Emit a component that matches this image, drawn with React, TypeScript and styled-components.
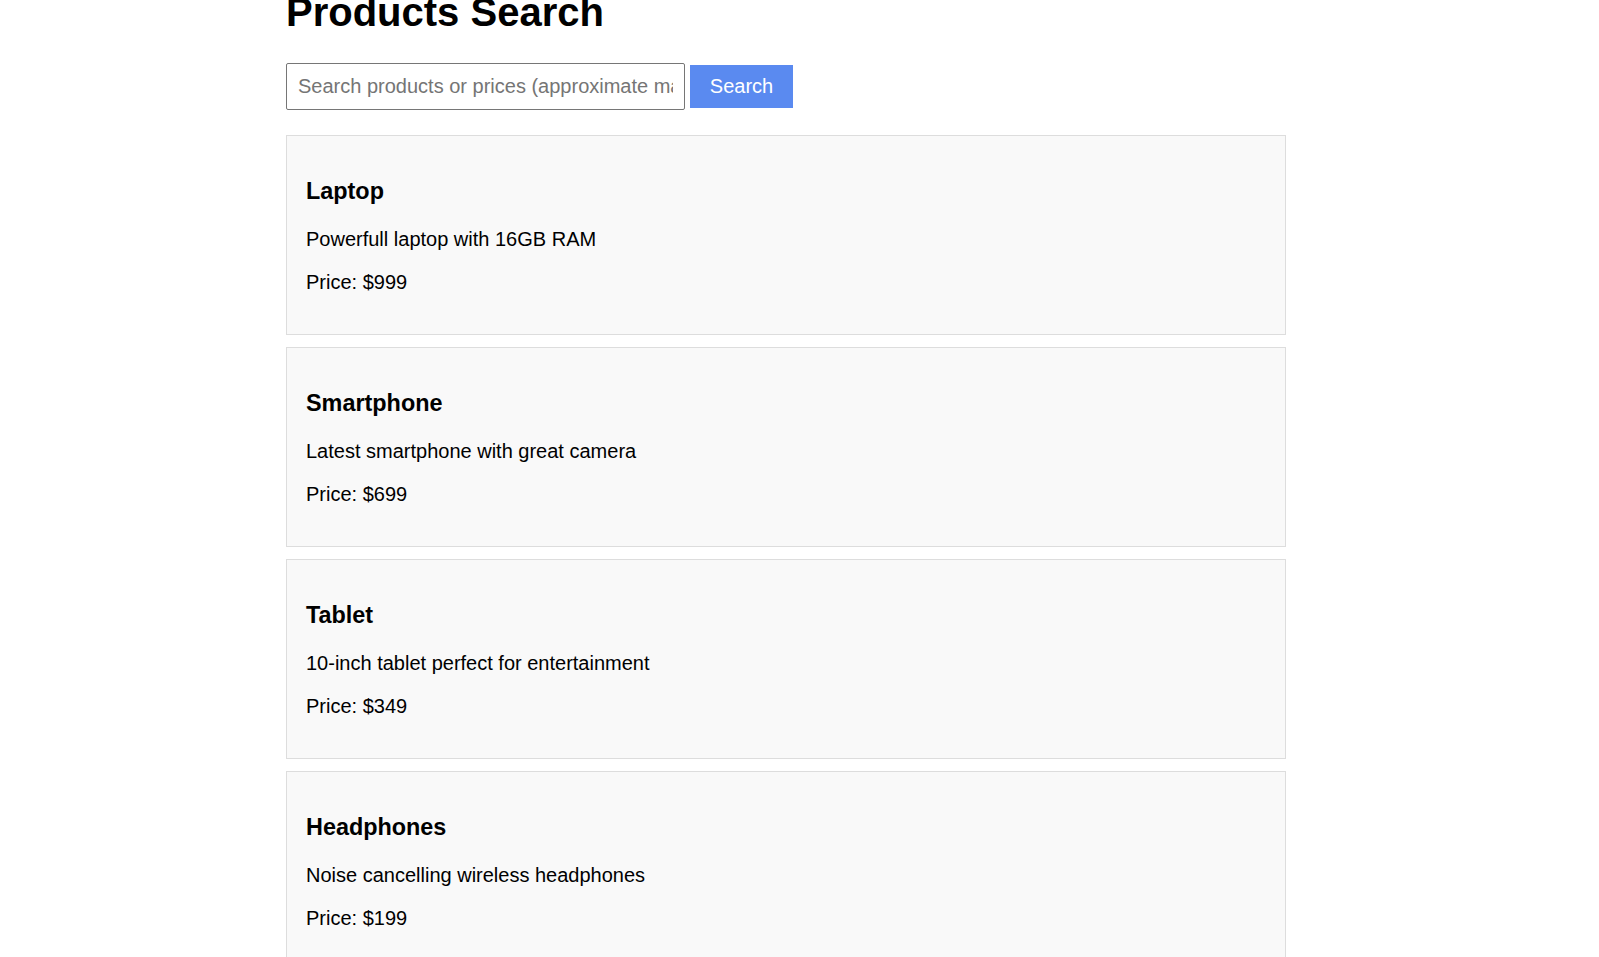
import React, { useState } from "react";
import styled, { createGlobalStyle } from "styled-components";

const GlobalStyle = createGlobalStyle`
  html, body {
    margin: 0;
    padding: 0;
    background: #ffffff;
    font-family: "Liberation Sans", Arial, sans-serif;
    color: #000000;
    overflow: hidden;
  }
`;

const Page = styled.div`
  width: 1000px;
  margin: 0 0 0 286px;
  font-family: "Liberation Sans", Arial, sans-serif;
  font-size: 20px;
`;

const Title = styled.h1`
  font-size: 40px;
  font-weight: bold;
  line-height: 46px;
  margin: -11px 0 28px;
`;

const SearchBar = styled.form`
  display: flex;
  align-items: center;
  gap: 5px;
  margin: 0 0 25px;
`;

const SearchInput = styled.input`
  box-sizing: border-box;
  width: 399px;
  height: 47px;
  padding: 0 11px;
  border: 1px solid #767676;
  border-radius: 2px;
  font-family: "Liberation Sans", Arial, sans-serif;
  font-size: 20px;
  color: #000;
  outline: none;
  &::placeholder {
    color: #757575;
  }
`;

const SearchButton = styled.button`
  box-sizing: border-box;
  height: 43px;
  width: 103px;
  padding: 0;
  border: none;
  background: #5a8af0;
  color: #ffffff;
  font-family: "Liberation Sans", Arial, sans-serif;
  font-size: 20px;
  cursor: pointer;
`;

const List = styled.div`
  display: flex;
  flex-direction: column;
  gap: 12.5px;
`;

const Card = styled.div`
  box-sizing: border-box;
  border: 1px solid #dddddd;
  background: #f9f9f9;
  padding: 0 19px;
  height: 199.5px;
  flex-shrink: 0;
  display: flow-root;
`;

const CardTitle = styled.h3`
  font-size: 23.4px;
  font-weight: bold;
  line-height: 27px;
  margin: 42px 0 23px;
`;

const CardText = styled.p`
  font-size: 20px;
  line-height: 23px;
  margin: 0 0 20px;
`;

const products = [
  { name: "Laptop", description: "Powerfull laptop with 16GB RAM", price: 999 },
  { name: "Smartphone", description: "Latest smartphone with great camera", price: 699 },
  { name: "Tablet", description: "10-inch tablet perfect for entertainment", price: 349 },
  { name: "Headphones", description: "Noise cancelling wireless headphones", price: 199 },
];

export default function App() {
  const [query, setQuery] = useState("");
  return (
    <Page>
      <GlobalStyle />
      <Title>Products Search</Title>
      <SearchBar onSubmit={(e) => e.preventDefault()}>
        <SearchInput
          value={query}
          onChange={(e) => setQuery(e.target.value)}
          placeholder="Search products or prices (approximate match)"
        />
        <SearchButton type="submit">Search</SearchButton>
      </SearchBar>
      <List>
        {products.map((p) => (
          <Card key={p.name}>
            <CardTitle>{p.name}</CardTitle>
            <CardText>{p.description}</CardText>
            <CardText>Price: ${p.price}</CardText>
          </Card>
        ))}
      </List>
    </Page>
  );
}
